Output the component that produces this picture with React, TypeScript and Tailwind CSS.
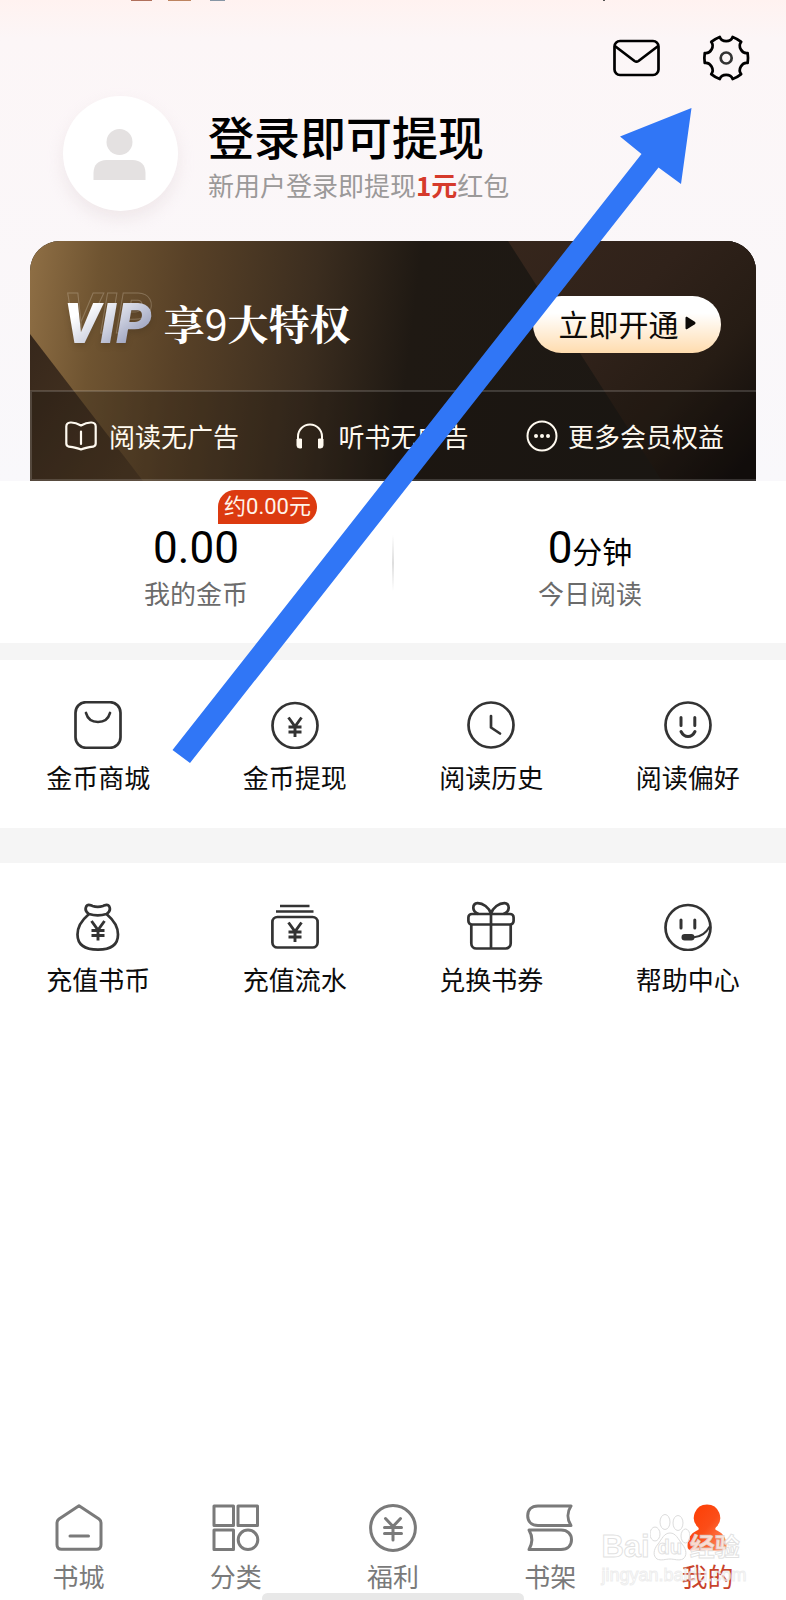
import type { ReactNode } from "react";

type Item = { label: string; icon: ReactNode };

function Glyph({ children, className = "size-12 [stroke-width:2.7]" }: { children: ReactNode; className?: string }) {
  return (
    <svg
      viewBox="0 0 48 48"
      className={className}
      fill="none"
      stroke="currentColor"
      strokeLinecap="round"
      strokeLinejoin="round"
      aria-hidden="true"
    >
      {children}
    </svg>
  );
}

const tabGlyph = "size-12 [stroke-width:3]";

function polar(radius: number, degrees: number) {
  const angle = (degrees * Math.PI) / 180;
  return `${(24.2 + radius * Math.cos(angle)).toFixed(2)} ${(24 + radius * Math.sin(angle)).toFixed(2)}`;
}

const gearPath =
  [0, 60, 120, 180, 240, 300]
    .map((a, i) =>
      [
        `${i === 0 ? "M" : "L"}${polar(22, a - 13)}`,
        `Q${polar(22.2, a)} ${polar(22, a + 13)}`,
        `C${polar(16.2, a + 14)} ${polar(16.2, a + 46)} ${polar(22, a + 47)}`,
      ].join(""),
    )
    .join("") + "z";

const yen = (
  <path
    d="M17.5 16.5l6.500 9 6.500-9M24 25v11M17.500 26h13M17.500 31h13"
    className="[stroke-width:2.9]"
    strokeLinecap="butt"
    strokeLinejoin="miter"
  />
);

const services: Item[] = [
  {
    label: "金币商城",
    icon: (
      <Glyph>
        <rect x="1.500" y="1.200" width="45" height="45.600" rx="10.500" />
        <path d="M12 12c1.500 5.500 6 9 12 9s10.500-3.500 12-9" />
      </Glyph>
    ),
  },
  {
    label: "金币提现",
    icon: (
      <Glyph>
        <circle cx="24" cy="24.500" r="22.500" />
        {yen}
      </Glyph>
    ),
  },
  {
    label: "阅读历史",
    icon: (
      <Glyph>
        <circle cx="24" cy="24" r="22.500" />
        <path d="M24 15v11.500l9 6" />
      </Glyph>
    ),
  },
  {
    label: "阅读偏好",
    icon: (
      <Glyph>
        <circle cx="24" cy="24" r="22.500" />
        <path d="M17 16.500v8M30.800 16.500v8M17 30.500c1.500 3 4 5 7 5s5.500-2 7-5" className="[stroke-width:3]" />
      </Glyph>
    ),
  },
];

const wallet: Item[] = [
  {
    label: "充值书币",
    icon: (
      <Glyph>
        <path d="M14.500 11.500C8 17 3.500 24 3.500 31.500 3.500 42 11 46.600 24 46.600s20-4.600 20-15.100C44 24 39.500 17 33 11.500" />
        <path d="M15 11c-3-2-4.500-4.500-2.500-8 1.500-2.500 4-.8 6 0 3 1 7.500 1 10.500 0 2-.8 4.500-2.500 6 0 2 3.500.5 6-2.500 8-5 1.500-12.500 1.500-17.500 0z" />
        <g transform="translate(0 1.500)">{yen}</g>
      </Glyph>
    ),
  },
  {
    label: "充值流水",
    icon: (
      <Glyph>
        <path d="M9 3h29.500M5 8.500h37.500" strokeLinecap="butt" />
        <rect x="1.400" y="14" width="45.200" height="30.500" rx="5" />
        <g transform="translate(0 3)">{yen}</g>
      </Glyph>
    ),
  },
  {
    label: "兑换书券",
    icon: (
      <svg
        viewBox="0 -2 48 50"
        className="-mt-0.5 h-[50px] w-12"
        fill="none"
        stroke="currentColor"
        strokeWidth="2.7"
        strokeLinejoin="round"
        aria-hidden="true"
      >
        <rect x="1.400" y="11" width="45.200" height="10.500" rx="3.500" />
        <path d="M4.300 21.500v19a5 5 0 0 0 5 5h29.400a5 5 0 0 0 5-5v-19M24 11v34.500" />
        <path d="M24 10.500C22 4.500 16 0 10.500.1 5 .8 4.500 8.500 11.500 11M24 10.500C26 4.500 32 0 37.500.1 43 .8 43.500 8.500 36.500 11" />
      </svg>
    ),
  },
  {
    label: "帮助中心",
    icon: (
      <Glyph>
        <circle cx="24" cy="24.500" r="22.500" />
        <path d="M17 17v8M30.800 17v8" className="[stroke-width:3]" />
        <rect x="18.500" y="32" width="11" height="4.500" rx="2.200" fill="currentColor" className="[stroke-width:2]" />
        <path d="M30 34.300c7-.5 12-4 15.500-10.500" className="[stroke-width:2]" />
      </Glyph>
    ),
  },
];

const tabs: Item[] = [
  {
    label: "书城",
    icon: (
      <Glyph className={tabGlyph}>
        <path d="M24 1.700l20 13.300c1.300 1 2 2.200 2 3.800v22c0 2.800-1.500 4.500-4.500 4.500h-35C3.500 45.300 2 43.500 2 40.800v-22c0-1.600.7-2.800 2-3.800zM15 32h18.500" />
      </Glyph>
    ),
  },
  {
    label: "分类",
    icon: (
      <Glyph className={tabGlyph}>
        <rect x="2" y="2" width="19.500" height="19.500" />
        <rect x="26" y="2" width="19.500" height="19.500" />
        <rect x="2" y="26" width="19.500" height="19.500" />
        <circle cx="36" cy="35.800" r="9.800" />
      </Glyph>
    ),
  },
  {
    label: "福利",
    icon: (
      <Glyph className={tabGlyph}>
        <circle cx="24" cy="24" r="22.400" />
        <path d="M16.500 14.500l7.500 8 7.500-8M24 22.500v13.500M15.500 23.500h17M15.500 29.500h17" />
      </Glyph>
    ),
  },
  {
    label: "书架",
    icon: (
      <Glyph className={tabGlyph}>
        <path d="M45 2H12C5 2 1.700 6.500 1.700 11.700S5 21.500 12 21.500h33c-4-6-4-13.500 0-19.500z" />
        <path d="M3 26h32c7 0 10.500 4.500 10.500 9.800S42 45.500 35 45.500H3c3.500-6 3.500-13.500 0-19.500z" />
      </Glyph>
    ),
  },
  {
    label: "我的",
    icon: (
      <svg viewBox="0 0 48 48" className="size-12" aria-hidden="true">
        <defs>
          <linearGradient id="me" x1="0" y1="0" x2="1" y2="1">
            <stop offset="0" stopColor="#ff3b00" />
            <stop offset="0.5" stopColor="#fb4d18" />
            <stop offset="1" stopColor="#ff9468" />
          </linearGradient>
        </defs>
        <path
          d="M24 .5a13.200 13.200 0 0 1 9 22.800c-1.500 1.800-.5 2.900 1.500 3.500 6 2.700 9 8.200 9 15.200 0 2.800-1.500 4.500-4.500 4.500H9c-3 0-4.500-1.700-4.500-4.500 0-7 3-12.500 9-15.200 2-.6 3-1.700 1.500-3.500A13.200 13.200 0 0 1 24 .5z"
          fill="url(#me)"
        />
      </svg>
    ),
  },
];

function Grid({ items, className }: { items: Item[]; className: string }) {
  return (
    <ul className={`grid grid-cols-4 ${className}`}>
      {items.map((item) => (
        <li key={item.label}>
          <button type="button" className="flex w-full flex-col items-center gap-2 text-[#333333]">
            {item.icon}
            <span className="text-[26px] leading-10 text-[#0c0c0c]">{item.label}</span>
          </button>
        </li>
      ))}
    </ul>
  );
}

function StatusRemnants() {
  return (
    <svg className="absolute left-0 top-0 h-0.5 w-full" viewBox="0 0 786 2" preserveAspectRatio="none" aria-hidden="true">
      <rect x="131" width="21" height="1" fill="#b0705c" />
      <rect x="168" width="23" height="1" fill="#bd8460" />
      <rect x="210" width="15" height="1" fill="#8796a5" />
      <rect x="603" width="2" height="1" fill="#555" />
    </svg>
  );
}

function VipCard() {
  return (
    <section className="relative mx-[30px] overflow-hidden rounded-t-[30px] bg-[#1d1813] text-[#fffaf0]">
      <svg className="absolute inset-0 size-full" viewBox="0 0 726 240" preserveAspectRatio="none" aria-hidden="true">
        <defs>
          <linearGradient id="gold" x1="0" y1="0" x2="1" y2="0.04">
            <stop offset="0" stopColor="#8f6f45" />
            <stop offset="0.1" stopColor="#6f5431" />
            <stop offset="0.22" stopColor="#584127" />
            <stop offset="0.4" stopColor="#3b2d1f" />
            <stop offset="0.54" stopColor="#1f1913" />
            <stop offset="1" stopColor="#1c1814" />
          </linearGradient>
          <linearGradient id="fold" x1="0" y1="0" x2="1" y2="1">
            <stop offset="0" stopColor="#36271b" />
            <stop offset="1" stopColor="#4f3a24" />
          </linearGradient>
          <linearGradient id="bronze" x1="0" y1="0" x2="1" y2="0.9">
            <stop offset="0" stopColor="#36261c" />
            <stop offset="0.4" stopColor="#30221a" />
            <stop offset="0.7" stopColor="#261c14" />
            <stop offset="1" stopColor="#100c0b" />
          </linearGradient>
        </defs>
        <rect width="726" height="240" fill="url(#gold)" />
        <path d="M0 93L113 240H0z" fill="url(#fold)" />
        <path d="M478 0H726V240H632z" fill="url(#bronze)" />
        <rect y="150" width="726" height="90" fill="#14100c" fillOpacity="0.25" />
      </svg>

      <div className="relative flex h-[149px] items-center justify-between pl-[34px] pr-[35px] pt-[17px]">
        <div className="flex items-center gap-3">
          <span className="relative font-[Roboto,sans-serif] text-[56px] font-black italic leading-[60px] before:absolute before:inset-x-0 before:-top-2.5 before:text-transparent before:opacity-30 before:content-['VIP'] before:[-webkit-text-stroke:1px_#d8cbb8]">
            <span className="relative bg-linear-to-br from-white from-25% via-[#c9cddd] via-55% to-[#7279a0] bg-clip-text text-transparent drop-shadow-md">
              VIP
            </span>
          </span>
          <h2 className="pb-1 font-['Noto_Serif_CJK_SC','Noto_Serif_SC','Source_Han_Serif_SC',serif] text-[41px] font-bold leading-[60px] text-white">
            享<span className="font-['Noto_Sans_CJK_SC',sans-serif] font-normal">9</span>大特权
          </h2>
        </div>
        <button
          type="button"
          className="flex h-[57px] w-[188px] items-center justify-center gap-1.5 rounded-full bg-linear-to-b from-white from-30% to-[#ffdcae] pb-0.5 text-[30px] text-[#0d0a07]"
        >
          立即开通
          <svg viewBox="0 0 11 14" className="h-3.5 w-[11px]" aria-hidden="true">
            <path d="M.5 2v10c0 1.200.9 1.600 1.800 1.100l7.500-4.800c.9-.6.9-2 0-2.600L2.300.9C1.400.4.5.8.5 2z" fill="#0d0a07" />
          </svg>
        </button>
      </div>

      <ul className="relative flex h-[91px] items-center justify-between border-b-2 border-l-2 border-t-2 border-[#ffffff28] pl-[33px] pr-8 text-[26px]">
        <li className="flex items-center gap-3">
          <svg viewBox="0 0 32 30" className="h-[30px] w-8" fill="none" stroke="currentColor" strokeWidth="2.200" strokeLinejoin="round" strokeLinecap="round" aria-hidden="true">
            <path d="M16 4.500C12.500 2.500 9 1.300 5.500 1.500 3 1.700 1.300 3 1.300 5.500v17c0 1.500.8 2.700 2.500 3.200 4.500.6 8.500 1.300 12.200 2.800 3.700-1.500 7.700-2.200 12.200-2.800 1.700-.5 2.500-1.700 2.500-3.200v-17c0-2.500-1.700-3.800-4.200-4C23 1.300 19.500 2.500 16 4.500zM16 10.500v12.500" />
          </svg>
          阅读无广告
        </li>
        <li className="flex items-center gap-3.5">
          <svg viewBox="0 0 28 28" className="size-7" fill="none" stroke="currentColor" strokeWidth="2" aria-hidden="true">
            <path d="M2 18v-3.500a12 12 0 0 1 24 0V18" />
            <path d="M1 17h4.500v9H3.500A2.500 2.500 0 0 1 1 23.500zM27 17h-4.500v9h2a2.500 2.500 0 0 0 2.500-2.500z" fill="currentColor" strokeWidth="1" strokeLinejoin="round" />
          </svg>
          听书无广告
        </li>
        <li className="flex items-center gap-2.5">
          <svg viewBox="0 0 32 32" className="size-8" fill="none" stroke="currentColor" strokeWidth="2" aria-hidden="true">
            <circle cx="16" cy="16" r="14.500" />
            <path d="M10 16h.01M16 16h.01M22 16h.01" strokeWidth="4" strokeLinecap="round" />
          </svg>
          更多会员权益
        </li>
      </ul>
    </section>
  );
}

function Watermark() {
  return (
    <div
      className="pointer-events-none absolute left-1/2 top-2 -ml-[106px] w-[150px] font-['Liberation_Sans','Noto_Sans_CJK_SC',sans-serif] text-[#ffffffcc] [-webkit-text-stroke:1px_#d4d4d4b0]"
      aria-hidden="true"
    >
      <div className="flex h-[51px] items-end text-[31px] font-bold leading-8">
        <span>Bai</span>
        <span className="relative flex h-[50px] w-10 shrink-0 items-end justify-center text-[20px]">
          <svg viewBox="0 0 40 48" className="absolute inset-0 size-full" fill="#ffffffb0" stroke="#dcdcdc" strokeWidth="1">
            <ellipse cx="5" cy="20" rx="5" ry="7" />
            <ellipse cx="15" cy="8" rx="5" ry="7.500" />
            <ellipse cx="28" cy="9" rx="5" ry="7.500" />
            <ellipse cx="35.500" cy="22" rx="4.500" ry="7" />
            <path d="M20 19c6 0 8 6 12 11 5 6 5 12 1 15-4 2-9 0-13 0s-9 2-13 0c-4-3-4-9 1-15 4-5 6-11 12-11z" />
          </svg>
          <span className="relative">du</span>
        </span>
        <span className="whitespace-nowrap text-[25px]">经验</span>
      </div>
      <div className="text-[18px] leading-6 text-[#ffffffa0] [-webkit-text-stroke:1px_#dcdcdc80]">jingyan.baidu.com</div>
    </div>
  );
}

function PointerArrow() {
  return (
    <svg
      className="pointer-events-none absolute left-[172px] top-[107px] h-[657px] w-[520px]"
      viewBox="172 107 520 657"
      fill="#3076f6"
      aria-hidden="true"
    >
      <path d="M691.500 108L620 136.500 641.500 154 172.500 750 190 763 658.500 167.500 681 184z" />
    </svg>
  );
}

export default function App() {
  return (
    <div className="relative flex min-h-screen flex-col overflow-hidden bg-white font-['Noto_Sans_CJK_SC',sans-serif] text-black">
      <StatusRemnants />

      <header className="bg-linear-to-b from-[#fff2f0] from-0% via-[#fcf6f7] via-8% to-[#f9f8fb]">
        <div className="flex h-24 items-start justify-end gap-[42px] pr-9 pt-[34px]">
          <button type="button" aria-label="消息">
            <Glyph>
              <rect x="2.500" y="7" width="44" height="34" rx="5.500" />
              <path d="M3.500 12.500L22.500 27c1.500 1 2.500 1 4 0L45.500 12.500" />
            </Glyph>
          </button>
          <button type="button" aria-label="设置">
            <Glyph>
              <path d={gearPath} />
              <circle cx="24.200" cy="24" r="5.500" stroke="#333" />
            </Glyph>
          </button>
        </div>

        <div className="flex h-[145px] items-start gap-[30px] pl-[63px]">
          <div className="size-[115px] shrink-0 rounded-full bg-white shadow-[0_8px_16px_#d8c8cc50]">
            <svg viewBox="0 0 115 115" className="size-full" fill="#e4e1e1" aria-hidden="true">
              <circle cx="56.500" cy="46" r="13" />
              <path d="M30.500 84v-7c0-8 5-13 13-13h26c8 0 13 5 13 13v7z" />
            </svg>
          </div>
          <div className="pt-3">
            <h1 className="text-[46px] font-medium leading-[54px]">登录即可提现</h1>
            <p className="text-[26px] leading-[46px] text-[#9b9999]">
              新用户登录即提现<strong className="font-bold text-[#d63a2b]">1元</strong>红包
            </p>
          </div>
        </div>
        <VipCard />
      </header>

      <section className="flex h-[162px] items-start pt-[42px] text-center">
        <div className="flex-1">
          <div className="relative mx-auto h-[50px] w-fit font-[Roboto,'Noto_Sans_CJK_SC',sans-serif] text-[44px] leading-[50px]">
            0.00
            <span className="absolute -top-[33px] left-[65px] h-[34px] whitespace-nowrap rounded-full rounded-bl-none bg-[#dc3a10] px-1.5 text-[22px] leading-[34px] text-[#fff3ea]">
              约0.00元
            </span>
          </div>
          <div className="text-[26px] leading-10 text-[#6b6b6b]">我的金币</div>
        </div>
        <div className="mt-3 h-14 w-0.5 bg-linear-to-b from-white via-[#dedede] to-white" />
        <div className="flex-1">
          <div className="h-[50px] font-[Roboto,'Noto_Sans_CJK_SC',sans-serif] text-[44px] leading-[50px]">
            0<span className="text-[30px] leading-none">分钟</span>
          </div>
          <div className="text-[26px] leading-10 text-[#6b6b6b]">今日阅读</div>
        </div>
      </section>

      <Grid items={services} className="h-[185px] border-t-[17px] border-[#f5f5f5] pt-[41px]" />
      <Grid items={wallet} className="border-t-[35px] border-[#f5f5f5] pt-10" />

      <nav className="relative mt-auto pb-1">
        <ul className="grid grid-cols-5">
          {tabs.map((tab) => (
            <li key={tab.label}>
              <a
                href="#"
                aria-current={tab.label === "我的" ? "page" : undefined}
                className="flex flex-col items-center gap-1 text-[#7a7a7a] aria-[current=page]:text-[#c8432b]"
              >
                {tab.icon}
                <span className="text-[26px] leading-10">{tab.label}</span>
              </a>
            </li>
          ))}
        </ul>
        <div className="absolute -bottom-1 left-1/3 right-1/3 h-[11px] rounded-full bg-[#e8e8e8]" />
        <div className="absolute right-0 top-0 w-1/5">
          <Watermark />
        </div>
      </nav>

      <PointerArrow />
    </div>
  );
}
